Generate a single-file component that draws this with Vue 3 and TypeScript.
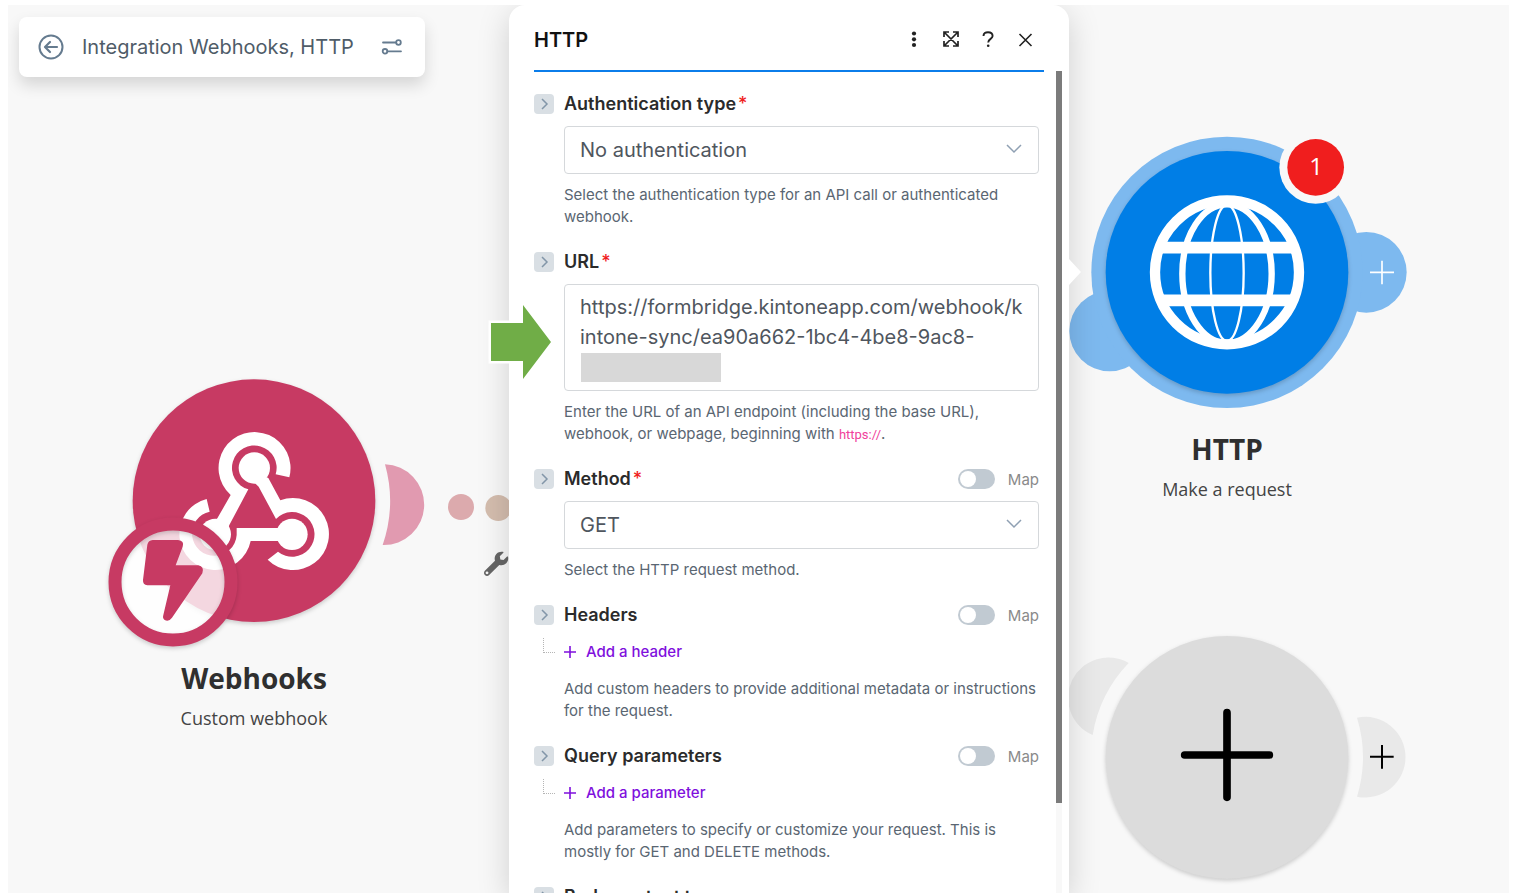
<script setup lang="ts">
import { ref } from 'vue'

interface Field {
  id: string
  label: string
  required?: boolean
  mappable?: boolean
  kind: 'select' | 'textarea' | 'list'
  options?: string[]
  addLabel?: string
  help: string
  code?: string
}

const url = ref('https://formbridge.kintoneapp.com/webhook/kintone-sync/ea90a662-1bc4-4be8-9ac8-')

const fields: Field[] = [
  {
    id: 'auth',
    label: 'Authentication type',
    required: true,
    kind: 'select',
    options: ['No authentication'],
    help: 'Select the authentication type for an API call or authenticated webhook.',
  },
  {
    id: 'url',
    label: 'URL',
    required: true,
    kind: 'textarea',
    help: 'Enter the URL of an API endpoint (including the base URL), webhook, or webpage, beginning with ',
    code: 'https://',
  },
  {
    id: 'method',
    label: 'Method',
    required: true,
    mappable: true,
    kind: 'select',
    options: ['GET'],
    help: 'Select the HTTP request method.',
  },
  {
    id: 'headers',
    label: 'Headers',
    mappable: true,
    kind: 'list',
    addLabel: 'Add a header',
    help: 'Add custom headers to provide additional metadata or instructions for the request.',
  },
  {
    id: 'query',
    label: 'Query parameters',
    mappable: true,
    kind: 'list',
    addLabel: 'Add a parameter',
    help: 'Add parameters to specify or customize your request. This is mostly for GET and DELETE methods.',
  },
  {
    id: 'body',
    label: 'Body content type',
    kind: 'select',
    options: ['application/json'],
    help: '',
  },
]
</script>

<template>
  <main class="page">
    <div class="canvas">
      <!-- Webhooks module -->
      <section class="node webhooks">
        <svg class="art" width="440" height="290" viewBox="0 0 1320 870" aria-hidden="true">
          <path d="M885 283A121 121 0 1 1 878 525A408 408 0 0 0 885 283Z" fill="#e19ab0" />
          <circle cx="1113" cy="411" r="39" fill="#dcaaad" />
          <circle cx="1225" cy="414" r="39" fill="#d4bdae" />
          <circle class="lift" cx="492" cy="392" r="364" fill="#c73a63" />
          <g fill="#fff">
            <path d="M598 322A108 108 0 1 0 422 375L382 445L350 480L405 500L418 465L475 358A67 67 0 1 1 557 313Z" />
            <circle cx="376" cy="493" r="47" />
            <circle cx="493" cy="294" r="47" />
            <path d="M530 322L535 324L571 391A108 108 0 1 1 533 569L564 545A67 67 0 1 0 558 447L506 350L490 335Z" />
            <circle cx="606" cy="493" r="47" />
            <path d="M440 474H566L590 460V526L563 513H482A108 108 0 1 1 350 387L359 425A67 67 0 1 0 440 495Z" />
          </g>
          <circle cx="249" cy="636" r="160" fill="#fff" fill-opacity=".8" />
          <circle class="lift" cx="249" cy="636" r="174" fill="none" stroke="#c73a63" stroke-width="39" />
          <path
            d="M188 510H264Q284 512 278 530L257 586H325Q344 590 337 610L246 743Q236 757 223 749Q217 745 220 735L241 646H172Q158 644 159 630L172 524Q175 511 188 510Z"
            fill="#c73a63"
          />
          <g transform="translate(1182 545) scale(.142)" fill="#666">
            <path
              d="M507.73 109.1c-2.24-9.03-13.54-12.09-20.12-5.51l-74.36 74.36-67.88-11.31-11.31-67.88 74.36-74.36c6.62-6.62 3.43-17.9-5.66-20.16-47.38-11.74-99.55.91-136.58 37.93-39.64 39.64-50.55 97.1-34.05 147.2L18.74 402.76c-24.99 24.99-24.99 65.51 0 90.5 24.99 24.99 65.51 24.99 90.5 0l213.21-213.21c50.12 16.71 107.47 5.68 147.37-34.22 37.07-37.07 49.7-89.32 37.91-136.73zM64 478c-17 0-30-13-30-30s13-30 30-30 30 13 30 30-13 30-30 30z"
            />
          </g>
        </svg>
        <div class="caption">
          <h2>Webhooks</h2>
          <p>Custom webhook</p>
        </div>
      </section>

      <!-- HTTP module -->
      <section class="node http">
        <svg class="art" width="380" height="300" viewBox="0 0 1140 900" aria-hidden="true">
          <g fill="#7db9ef">
            <circle cx="149" cy="633" r="121" />
            <circle cx="919" cy="457" r="121" />
            <circle cx="501" cy="457" r="407" />
          </g>
          <circle class="lift" cx="501" cy="457" r="364" fill="#007ee6" />
          <g fill="none" stroke="#fff">
            <circle cx="501" cy="457" r="216" stroke-width="31" />
            <ellipse cx="501" cy="461" rx="134" ry="208" stroke-width="19" />
            <ellipse cx="501" cy="459" rx="50" ry="204" stroke-width="7" />
            <path d="M300 383H702M300 541H702" stroke-width="35" />
          </g>
          <path d="M930 457H1002M966 422V493" stroke="#fff" stroke-width="5" />
          <circle cx="767" cy="142" r="109" fill="#f8f8f8" />
          <circle cx="767" cy="142" r="85" fill="#f01e1e" />
        </svg>
        <span class="count">1</span>
        <div class="caption">
          <h2>HTTP</h2>
          <p>Make a request</p>
        </div>
      </section>

      <!-- Empty module -->
      <section class="node empty">
        <svg class="art" width="380" height="273" viewBox="0 600 1140 819" aria-hidden="true">
          <g fill="#e9e9e9">
            <path d="M206 729A121 121 0 1 0 98 945A407 407 0 0 1 206 729Z" />
            <path d="M891 893A121 121 0 1 1 891 1130A407 407 0 0 0 891 893Z" />
          </g>
          <circle class="lift" cx="501" cy="1012" r="364" fill="#dcdcdc" />
          <path d="M374 1005H628M501 878V1132" stroke="#000" stroke-width="23" stroke-linecap="round" />
          <path d="M930 1010H1001M966 975V1046" stroke="#000" stroke-width="6" />
        </svg>
      </section>

      <header class="toolbar">
        <button type="button" aria-label="Back">
          <svg width="26" height="26" viewBox="0 0 26 26" fill="none" stroke="#657b8f" stroke-width="2" stroke-linecap="round" stroke-linejoin="round">
            <circle cx="13" cy="13" r="11.5" />
            <path d="M19 13H7.500M12 8L7 13L12 18" stroke-width="2.200" />
          </svg>
        </button>
        <h1>Integration Webhooks, HTTP</h1>
        <button type="button" aria-label="Scenario options">
          <svg width="22" height="18" viewBox="0 0 22 18" fill="none" stroke="#657b8f" stroke-width="1.800" stroke-linecap="round">
            <circle cx="17.500" cy="4.500" r="2.300" />
            <path d="M2 4.500H15" />
            <circle cx="4" cy="13.300" r="2.300" />
            <path d="M6.500 13.300H20" />
          </svg>
        </button>
      </header>

      <div class="dialog" role="dialog" aria-labelledby="dialog-title">
        <header class="dialog-head">
          <h2 id="dialog-title">HTTP</h2>
          <button type="button" aria-label="More">
            <svg width="20" height="20" viewBox="0 0 20 20" fill="#222">
              <circle cx="10" cy="3.500" r="2.100" />
              <circle cx="10" cy="9.300" r="2.100" />
              <circle cx="10" cy="15" r="2.100" />
            </svg>
          </button>
          <button type="button" aria-label="Expand">
            <svg width="20" height="20" viewBox="0 0 20 20" fill="none" stroke="#222" stroke-width="1.700">
              <path d="M3 2L17 16M17 2L3 16M3 7V2H8M12 2H17V7M17 11V16H12M8 16H3V11" />
            </svg>
          </button>
          <button type="button" aria-label="Help">
            <svg width="20" height="20" viewBox="0 0 20 20" fill="none" stroke="#222" stroke-width="1.900">
              <path d="M5.500 6C5.500 3.300 7.500 2.200 10 2.200S14.600 3.500 14.600 6C14.600 9 10.200 8.800 10.200 12.500" />
              <circle cx="10.200" cy="15.800" r="1.300" fill="#222" stroke="none" />
            </svg>
          </button>
          <button type="button" aria-label="Close">
            <svg width="20" height="20" viewBox="0 0 20 20" fill="none" stroke="#222" stroke-width="1.600">
              <path d="M4.500 4L16.500 16M16.500 4L4.500 16" />
            </svg>
          </button>
        </header>

        <form class="fields" @submit.prevent>
          <div v-for="field in fields" :key="field.id" class="field">
            <div class="label-row">
              <button type="button" class="expander" :aria-label="'Expand ' + field.label">
                <svg width="20" height="20" viewBox="0 0 20 20" fill="none" stroke="#8296a8" stroke-width="1.500">
                  <path d="M8 5L13 10L8 15" />
                </svg>
              </button>
              <label class="name" :for="field.id">{{ field.label }}<span v-if="field.required" class="star">*</span></label>
              <label v-if="field.mappable" class="map"><input type="checkbox" role="switch" />Map</label>
            </div>

            <div v-if="field.kind === 'select'" class="control">
              <select :id="field.id">
                <option v-for="option in field.options" :key="option">{{ option }}</option>
              </select>
              <svg class="caret" width="16" height="10" viewBox="0 0 16 10" fill="none" stroke="#8fa0b3" stroke-width="1.500">
                <path d="M1 1L8 8L15 1" />
              </svg>
            </div>

            <div v-else-if="field.kind === 'textarea'" class="control">
              <textarea :id="field.id" v-model="url" spellcheck="false"></textarea>
              <span class="redaction"></span>
            </div>

            <div v-else class="add-row">
              <span class="branch"></span>
              <button :id="field.id" type="button" class="add">
                <svg width="12" height="12" viewBox="0 0 12 12" stroke="#7f10dd" stroke-width="1.600">
                  <path d="M0 6H12M6 0V12" />
                </svg>
                {{ field.addLabel }}
              </button>
            </div>

            <p class="help">{{ field.help }}<template v-if="field.code"><code>{{ field.code }}</code>.</template></p>
          </div>
        </form>
        <div class="scrollbar"><div class="thumb"></div></div>
        <span class="pointer"></span>
      </div>

      <svg class="callout" width="68" height="80" viewBox="0 0 68 80" aria-hidden="true">
        <path d="M3 20H35V2L64 39L35 76V58H3Z" fill="#fff" stroke="#fff" stroke-width="5" />
        <path d="M3 20H35V2L63 39L35 76V58H3Z" fill="#70ad47" />
      </svg>
    </div>
  </main>
</template>

<style>
body {
  margin: 0;
  background: #fff;
}
</style>

<style scoped>
* {
  box-sizing: border-box;
}
.page {
  height: 100vh;
  padding: 5px 5px 0 8px;
  overflow: hidden;
  font-family: Inter, 'Liberation Sans', sans-serif;
}
h1,
h2,
p {
  margin: 0;
}
button {
  padding: 0;
  border: 0;
  background: none;
  font: inherit;
  cursor: pointer;
}
svg {
  display: block;
}
.canvas {
  position: relative;
  height: 100%;
  overflow: hidden;
  background: #f8f8f8;
}
.node {
  position: absolute;
}
.webhooks {
  left: 82px;
  top: 365px;
}
.http {
  left: 1052px;
  top: 115px;
}
.empty {
  left: 1052px;
  top: 615px;
}
.lift {
  filter: drop-shadow(0 6px 6px rgba(0, 0, 0, 0.18));
}
.caption {
  color: #2f2f2f;
  font-family: 'Open Sans', 'Noto Sans', sans-serif;
  text-align: center;
}
.webhooks .caption {
  width: 328px;
}
.http .caption {
  width: 334px;
  margin-top: 11px;
}
.caption h2 {
  font-size: 28px;
  line-height: 36px;
  font-weight: 700;
}
.caption p {
  margin-top: 8px;
  color: #444;
  font-size: 18px;
  line-height: 28px;
}
.count {
  position: absolute;
  left: 228px;
  top: 31px;
  width: 56px;
  color: #fff;
  font: 24px/30px 'Open Sans', 'Noto Sans', sans-serif;
  text-align: center;
}
.toolbar {
  position: absolute;
  left: 11px;
  top: 12px;
  display: flex;
  align-items: center;
  width: 406px;
  height: 60px;
  padding: 0 22px 0 19px;
  border-radius: 8px;
  background: #fff;
  box-shadow: 0 8px 16px rgba(0, 0, 0, 0.14);
}
.toolbar h1 {
  flex: 1;
  margin-left: 18px;
  color: #4f5c68;
  font-size: 20px;
  line-height: 28px;
  font-weight: 400;
}
.dialog {
  position: absolute;
  left: 501px;
  top: 0;
  bottom: 0;
  width: 560px;
  border-radius: 16px 16px 0 0;
  background: #fff;
  box-shadow: 0 8px 32px rgba(0, 0, 0, 0.17);
}
.dialog-head {
  display: flex;
  align-items: center;
  gap: 17px;
  height: 67px;
  margin: 0 25px;
  padding: 4px 9px 0 0;
  border-bottom: 2px solid #0b7dea;
}
.dialog-head h2 {
  flex: 1;
  color: #111;
  font-size: 20px;
  line-height: 28px;
  font-weight: 600;
}
.fields {
  height: calc(100% - 67px);
  padding: 20px 30px 0 25px;
  overflow: hidden;
}
.field {
  margin-bottom: 22px;
}
.label-row {
  display: flex;
  align-items: center;
  height: 24px;
}
.expander {
  width: 20px;
  height: 20px;
  margin-right: 10px;
  border-radius: 4px;
  background: #d9dfe4;
}
.name {
  flex: 1;
  color: #2b2b2b;
  font-size: 18px;
  line-height: 24px;
  font-weight: 600;
}
.star {
  margin-left: 2px;
  color: #f01e1e;
  font-weight: 500;
}
.map {
  display: flex;
  align-items: center;
  gap: 13px;
  color: #8a8a8a;
  font-size: 15px;
}
.map input {
  appearance: none;
  width: 37px;
  height: 20px;
  margin: 0;
  padding: 2px;
  border-radius: 10px;
  background: #c1cad2;
}
.map input::before {
  content: '';
  display: block;
  width: 16px;
  height: 16px;
  border-radius: 50%;
  background: #fff;
}
.control {
  position: relative;
  margin: 10px 0 0 30px;
}
select,
textarea {
  display: block;
  width: 100%;
  border: 1px solid #d5d8db;
  border-radius: 4px;
  background: #fff;
  color: #4f565e;
  font: 20px/30px Inter, 'Liberation Sans', sans-serif;
}
select {
  appearance: none;
  height: 48px;
  padding: 0 40px 0 15px;
}
textarea {
  height: 107px;
  padding: 7px 13px 7px 15px;
  resize: none;
  overflow: hidden;
  word-break: break-all;
}
.caret {
  position: absolute;
  right: 17px;
  top: 18px;
}
.redaction {
  position: absolute;
  left: 17px;
  top: 69px;
  width: 140px;
  height: 29px;
  background: #d8d8d8;
}
.help {
  margin: 10px 0 0 30px;
  color: #5a6672;
  font-size: 15px;
  line-height: 22px;
}
.help code {
  color: #f0419b;
  font-family: Roboto, 'Noto Sans', sans-serif;
  font-size: 13px;
  line-height: 1;
}
.add-row {
  display: flex;
  align-items: center;
  height: 24px;
  margin-top: 13px;
}
.branch {
  width: 12px;
  height: 15px;
  margin: 0 9px 14px 9px;
  border: dotted #b5b5b5;
  border-width: 0 0 1px 1px;
}
.add {
  display: flex;
  align-items: center;
  gap: 10px;
  color: #7f10dd;
  font-size: 15px;
  line-height: 24px;
  font-weight: 500;
}
.add-row + .help {
  margin-top: 14px;
}
.scrollbar {
  position: absolute;
  right: 7px;
  top: 66px;
  bottom: 0;
  width: 6px;
  background: #f8f8f8;
}
.thumb {
  height: 732px;
  background: #7b7b7b;
}
.pointer {
  position: absolute;
  left: 100%;
  top: 254px;
  width: 12px;
  height: 26px;
  background: #fff;
  clip-path: polygon(0 0, 100% 50%, 0 100%);
}
.callout {
  position: absolute;
  left: 480px;
  top: 298px;
}
</style>
